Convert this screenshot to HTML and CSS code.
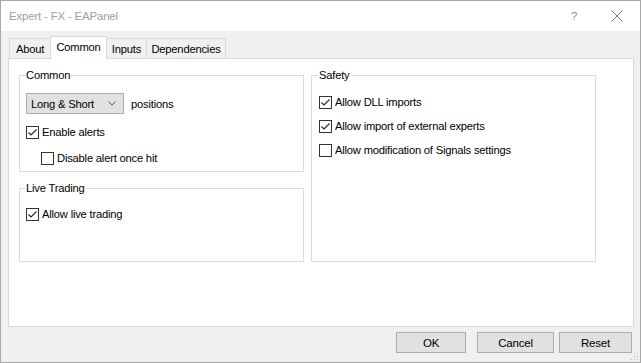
FILE: index.html
```html
<!DOCTYPE html>
<html lang="en">
<head>
  <meta charset="UTF-8">
  <title>Expert - FX - EAPanel</title>
  <link rel="stylesheet" href="styles.css">
</head>
<body>
  <div class="window">
    <div class="titlebar">
      <span class="title">Expert - FX - EAPanel</span>
      <span class="help">?</span>
      <svg class="close" width="12" height="12" viewBox="0 0 12 12">
        <path d="M0.5 0.5 L11.5 11.5 M11.5 0.5 L0.5 11.5" stroke="#7a7a7a" stroke-width="1" fill="none"/>
      </svg>
    </div>

    <div class="content">
      <div class="tabs">
        <div class="tab tab-about">About</div>
        <div class="tab tab-common active">Common</div>
        <div class="tab tab-inputs">Inputs</div>
        <div class="tab tab-deps">Dependencies</div>
      </div>

      <div class="panel">
        <div class="columns">
          <div class="col">
            <fieldset class="group group-common">
              <legend>Common</legend>
              <div class="select-row">
                <div class="select">
                  <span>Long &amp; Short</span>
                  <svg width="8" height="5" viewBox="0 0 8 5"><path d="M0.5 0.5 L4 4 L7.5 0.5" stroke="#555" fill="none"/></svg>
                </div>
                <span class="select-label">positions</span>
              </div>
              <label class="check"><span class="box checked"></span>Enable alerts</label>
              <label class="check indent"><span class="box"></span>Disable alert once hit</label>
            </fieldset>

            <fieldset class="group group-live">
              <legend>Live Trading</legend>
              <label class="check"><span class="box checked"></span>Allow live trading</label>
            </fieldset>
          </div>

          <fieldset class="group group-safety">
            <legend>Safety</legend>
            <label class="check"><span class="box checked"></span>Allow DLL imports</label>
            <label class="check"><span class="box checked"></span>Allow import of external experts</label>
            <label class="check"><span class="box"></span>Allow modification of Signals settings</label>
          </fieldset>
        </div>
      </div>

      <div class="buttons">
        <button class="btn btn-ok">OK</button>
        <button class="btn btn-cancel">Cancel</button>
        <button class="btn btn-reset">Reset</button>
      </div>
    </div>

    <svg class="grip" width="8" height="8" viewBox="0 0 8 8">
      <rect x="6" y="0" width="1" height="1" fill="#b8b8b8"/>
      <rect x="3" y="3" width="1" height="1" fill="#b8b8b8"/>
      <rect x="6" y="3" width="1" height="1" fill="#b8b8b8"/>
      <rect x="0" y="6" width="1" height="1" fill="#b8b8b8"/>
      <rect x="3" y="6" width="1" height="1" fill="#b8b8b8"/>
      <rect x="6" y="6" width="1" height="1" fill="#b8b8b8"/>
    </svg>
  </div>
</body>
</html>
```

FILE: styles.css
```css
* {
  box-sizing: border-box;
}

body {
  margin: 0;
  font-family: "Liberation Sans", Arial, sans-serif;
  font-size: 11.2px;
  letter-spacing: -0.2px;
  color: #000;
  background: #f0f0f0;
}

.window {
  position: relative;
  width: 641px;
  height: 363px;
  border: 1px solid #a9a9a9;
  display: flex;
  flex-direction: column;
  background: #f0f0f0;
}

.titlebar {
  height: 30px;
  background: #fff;
  display: flex;
  align-items: center;
  padding-left: 8px;
}

.title {
  color: #a0a0a0;
  flex: 1;
  font-size: 11.5px;
}

.help {
  color: #8a8a8a;
  margin-right: 34px;
}

.close {
  margin-right: 17px;
}

.content {
  flex: 1;
  padding: 6px 7px 0 7px;
  display: flex;
  flex-direction: column;
}

/* tabs */

.tabs {
  display: flex;
  align-items: flex-end;
  height: 21px;
  padding-left: 1px;
  position: relative;
  z-index: 1;
}

.tab {
  height: 20px;
  border: 1px solid #d9d9d9;
  border-bottom: none;
  background: #f0f0f0;
  display: flex;
  align-items: center;
  justify-content: center;
}

.tab-about { width: 41px; border-right: none; }
.tab-common { width: 57px; }
.tab-inputs { width: 40px; border-left: none; }
.tab-deps { width: 79px; border-left: none; }

.tab.active {
  height: 23px;
  background: #fff;
  margin-bottom: -1px;
  padding-bottom: 2px;
}

/* panel */

.panel {
  width: 626px;
  height: 269px;
  background: #fff;
  border: 1px solid #d9d9d9;
  padding: 9px 10px 0 10px;
}

.columns {
  display: grid;
  grid-template-columns: 285px 285px;
  column-gap: 7px;
  height: 194px;
}

.col {
  display: flex;
  flex-direction: column;
  gap: 9px;
}

.group {
  margin: 0;
  border: 1px solid #dcdcdc;
  padding: 0 6px 1px 6px;
  min-width: 0;
}

.group legend {
  padding: 0 1px;
  line-height: 14px;
  margin-left: -1px;
}

.group-common {
  padding-top: 11px;
}

.group-live {
  flex: 1;
  padding-top: 7px;
}

.group-safety {
  padding: 8px 7px 0 7px;
}

.select-row {
  display: flex;
  align-items: center;
  margin-bottom: 6px;
}

.select {
  width: 98px;
  height: 21px;
  background: #e1e1e1;
  border: 1px solid #adadad;
  display: flex;
  align-items: center;
  justify-content: space-between;
  padding: 0 7px 0 4px;
}

.select-label {
  margin-left: 7px;
}

.check {
  display: flex;
  align-items: center;
  height: 24px;
}

.group-common .check {
  margin-top: 2px;
}

.check.indent {
  margin-left: 15px;
}

.box {
  width: 13px;
  height: 13px;
  border: 1px solid #333;
  background: #fff;
  margin-right: 3px;
  flex: none;
}

.box.checked {
  background: #fff url("data:image/svg+xml,%3Csvg xmlns='http://www.w3.org/2000/svg' width='11' height='11'%3E%3Cpath d='M1.5 5.5 L4 8 L9.5 2.5' stroke='%23222' stroke-width='1.1' fill='none'/%3E%3C/svg%3E") no-repeat center;
}

/* buttons */

.buttons {
  display: flex;
  justify-content: flex-end;
  padding: 5px 1px 0 0;
}

.btn {
  height: 21px;
  background: #e1e1e1;
  border: 1px solid #adadad;
  font-family: inherit;
  font-size: 11.5px;
  letter-spacing: -0.2px;
  color: #000;
  padding: 0;
}

.btn-ok { width: 70px; }
.btn-cancel { width: 77px; margin-left: 11px; }
.btn-reset { width: 73px; margin-left: 5px; }

.grip {
  position: absolute;
  right: 1px;
  bottom: 1px;
}
```
